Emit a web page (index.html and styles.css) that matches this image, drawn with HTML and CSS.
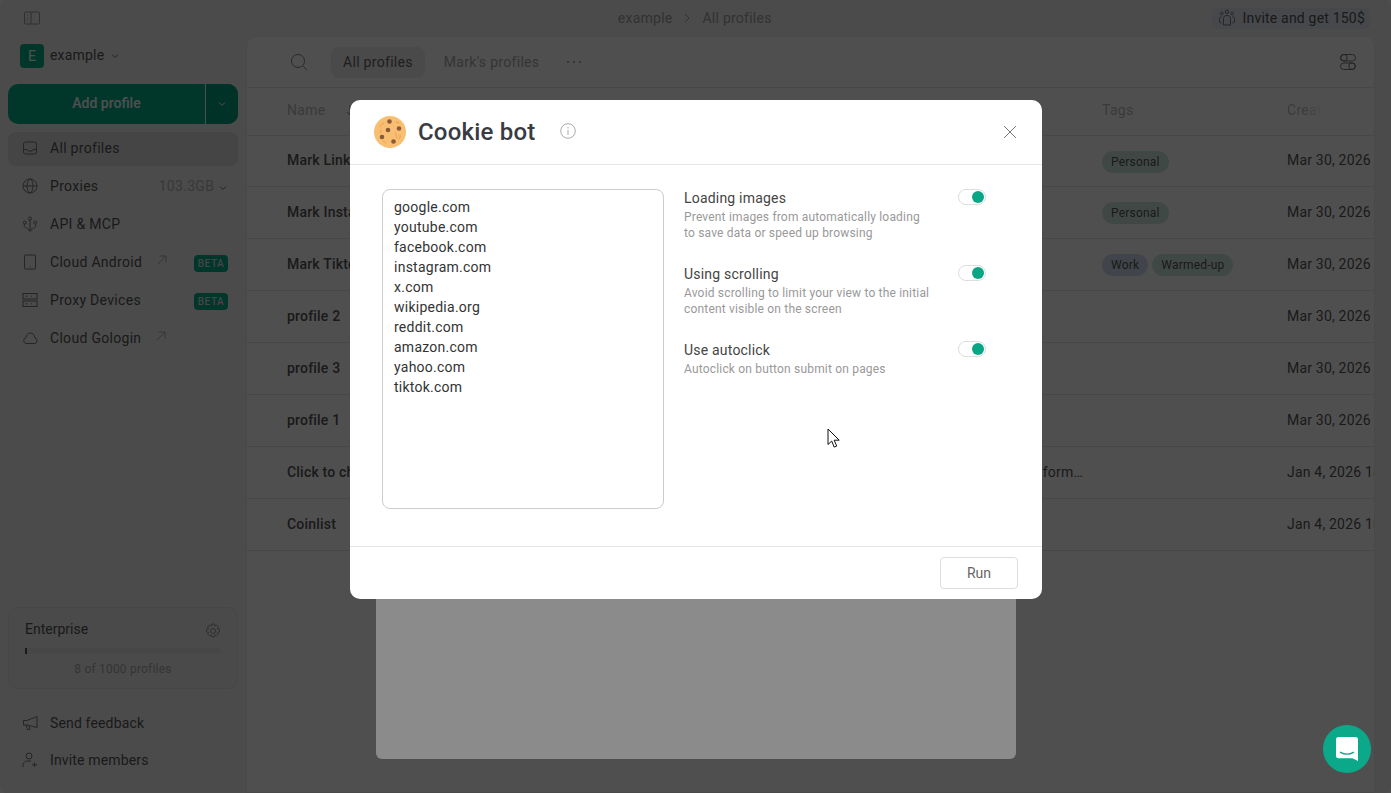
FILE: index.html
```html
<!DOCTYPE html>
<html lang="en">
<head>
    <meta charset="UTF-8">
    <title>Cookie bot</title>
    <link rel="stylesheet" href="styles.css">
</head>
<body>

<div class="app">
    <div class="topbar">
        <svg class="side-toggle" width="18" height="14" viewBox="0 0 18 14"><rect x="1.5" y="1" width="15" height="12" rx="1"/><path d="M8 1v12M4 4h1M4 7h1M4 10h1"/></svg>
        <div class="crumbs">
            <span>example</span>
            <svg width="8" height="10" viewBox="0 0 8 10"><path d="M2 1l4 4-4 4"/></svg>
            <span>All profiles</span>
        </div>
        <div class="invite">
            <svg width="18" height="18" viewBox="0 0 18 18"><circle cx="9" cy="2.8" r="1.6"/><circle cx="3.7" cy="4.5" r="1.3"/><circle cx="14.3" cy="4.5" r="1.3"/><path d="M5.5 16V9.5C5.5 7.5 7 6.5 9 6.5s3.500 1 3.500 3V16zM3.500 7.500C2 8 1.500 9 1.500 10.500v2.500l2 1M14.500 7.500C16 8 16.500 9 16.500 10.500v2.500l-2 1"/></svg>
            Invite and get 150$
        </div>
    </div>

    <div class="content">
        <div class="sidebar">
            <div class="workspace">
                <span class="avatar">E</span>
                <span>example</span>
                <svg class="chev" width="8" height="6" viewBox="0 0 8 6"><path d="M1 1.500l3 3 3-3"/></svg>
            </div>
            <div class="add-btn">
                <span class="add-main">Add profile</span>
                <span class="add-more"><svg class="chev" width="8" height="6" viewBox="0 0 8 6"><path d="M1 1.500l3 3 3-3"/></svg></span>
            </div>
            <div class="nav">
                <div class="nav-item active">
                    <svg width="16" height="16" viewBox="0 0 16 16"><rect x="1.500" y="2" width="13" height="12" rx="2"/><path d="M1.500 9.500h3.500l1 1.500h4l1-1.500h3.500"/></svg>
                    All profiles
                </div>
                <div class="nav-item">
                    <svg width="16" height="16" viewBox="0 0 16 16"><circle cx="8" cy="8" r="7"/><ellipse cx="8" cy="8" rx="3" ry="7"/><path d="M1 8h14"/></svg>
                    Proxies
                    <span class="traffic">103.3GB <svg class="chev" width="8" height="6" viewBox="0 0 8 6"><path d="M1 1.500l3 3 3-3"/></svg></span>
                </div>
                <div class="nav-item">
                    <svg width="16" height="16" viewBox="0 0 16 16"><circle cx="8" cy="2.500" r="1.500"/><path d="M8 4v11M8 15c-2 0-2-2-2-3M8 15c2 0 2-2 2-3"/><circle cx="2.800" cy="6.500" r="1.500"/><circle cx="13.200" cy="6.500" r="1.500"/><path d="M2.800 8c-1.500 2 0 4 2 4M13.200 8c1.500 2 0 4-2 4"/></svg>
                    API &amp; MCP
                </div>
                <div class="nav-item">
                    <svg width="16" height="16" viewBox="0 0 16 16"><rect x="2.500" y="1" width="11" height="14" rx="1"/><path d="M7.500 12.500h1"/></svg>
                    Cloud Android
                    <svg class="ext" width="10" height="10" viewBox="0 0 10 10"><path d="M1 9l8-8M2.500 1H9v6.500"/></svg>
                    <span class="beta">BETA</span>
                </div>
                <div class="nav-item">
                    <svg width="16" height="16" viewBox="0 0 16 16"><rect x="1" y="1.500" width="14" height="5.500" /><rect x="1" y="9" width="14" height="5.500"/><path d="M3.500 4.200h2M3.500 11.800h2M9 4.200h1M9 11.800h1"/></svg>
                    Proxy Devices
                    <span class="beta">BETA</span>
                </div>
                <div class="nav-item">
                    <svg width="16" height="16" viewBox="0 0 16 16"><path d="M4 13.500h8.500a2.800 2.800 0 0 0 .5-5.500C12.500 4.500 10.500 3 8.500 3 6 3 4.500 5 4 7.500a3.100 3.100 0 0 0 0 6z"/></svg>
                    Cloud Gologin
                    <svg class="ext" width="10" height="10" viewBox="0 0 10 10"><path d="M1 9l8-8M2.500 1H9v6.500"/></svg>
                </div>
            </div>

            <div class="plan">
                <div class="plan-top">
                    Enterprise
                    <svg width="16" height="16" viewBox="0 0 16 16"><circle cx="8" cy="8" r="2.500"/><path d="M6.700 1h2.600l.4 2 1.800-.9 1.900 1.900-1 1.700 2.100.5v2.600l-2.100.5 1 1.700-1.900 1.900-1.800-.9-.4 2H6.700l-.4-2-1.800.9L2.600 11l1-1.700-2.100-.5V6.200l2.100-.5-1-1.700 1.900-1.900 1.800.9z"/></svg>
                </div>
                <div class="plan-bar"><div class="plan-fill"></div></div>
                <div class="plan-count">8 of 1000 profiles</div>
            </div>
            <div class="side-link">
                <svg width="16" height="16" viewBox="0 0 16 16"><path d="M15 1.500v11L5 10H1.500V5.500H5zM4 10l1.500 4.500h2.500L7 10.800"/></svg>
                Send feedback
            </div>
            <div class="side-link">
                <svg width="16" height="16" viewBox="0 0 16 16"><circle cx="7" cy="4" r="3"/><path d="M1 15v-2c0-2.500 2-4 4-4h4M12.500 10.500v4.500M10 12.800h5"/></svg>
                Invite members
            </div>
        </div>

        <div class="main">
            <div class="toolbar">
                <svg class="search" width="18" height="18" viewBox="0 0 18 18"><circle cx="8" cy="8" r="6.500"/><path d="M13 13l4 4"/></svg>
                <span class="tab current">All profiles</span>
                <span class="tab">Mark's profiles</span>
                <svg class="dots" width="16" height="4" viewBox="0 0 16 4"><circle cx="2" cy="2" r="1"/><circle cx="8" cy="2" r="1"/><circle cx="14" cy="2" r="1"/></svg>
                <svg class="columns" width="18" height="18" viewBox="0 0 18 18"><rect x="1.500" y="1.500" width="15" height="6.500" rx="3.200"/><rect x="1.500" y="10" width="15" height="6.500" rx="3.200"/><circle cx="5" cy="4.700" r="3.200"/><circle cx="13" cy="13.200" r="3.200"/></svg>
            </div>
            <div class="row head">
                <span class="cell-name">Name <svg class="sort" width="8" height="12" viewBox="0 0 8 12"><path d="M4 1v10M1 8l3 3 3-3"/></svg></span>
                <span></span>
                <span>Tags</span>
                <span class="fade">Created</span>
            </div>
            <div class="row first"><b>Mark LinkedIn</b><span></span><span class="tags"><i class="tag green">Personal</i></span><span>Mar 30, 2026</span></div>
            <div class="row"><b>Mark Instagram</b><span></span><span class="tags"><i class="tag green">Personal</i></span><span>Mar 30, 2026</span></div>
            <div class="row"><b>Mark Tiktok</b><span></span><span class="tags"><i class="tag blue">Work</i><i class="tag green">Warmed-up</i></span><span>Mar 30, 2026</span></div>
            <div class="row"><b>profile 2</b><span></span><span></span><span>Mar 30, 2026</span></div>
            <div class="row"><b>profile 3</b><span></span><span></span><span>Mar 30, 2026</span></div>
            <div class="row"><b>profile 1</b><span></span><span></span><span>Mar 30, 2026</span></div>
            <div class="row"><b>Click to check</b><span class="note">Open the page and check the platform…</span><span></span><span>Jan 4, 2026 18:20</span></div>
            <div class="row"><b>Coinlist</b><span></span><span></span><span>Jan 4, 2026 18:11</span></div>
        </div>
    </div>
</div>

<div class="overlay"></div>
<div class="backdrop-card"></div>

<div class="modal">
    <div class="modal-head">
        <svg class="cookie" width="32" height="32" viewBox="0 0 32 32">
            <circle cx="16" cy="16" r="16" fill="#f8bf72"/>
            <g fill="#8a5a38">
                <circle cx="15.500" cy="5.500" r="2.300"/><circle cx="25" cy="12.500" r="2.300"/><circle cx="14" cy="14" r="2.300"/><circle cx="8" cy="21" r="2.300"/><circle cx="19.500" cy="25.500" r="2.300"/>
            </g>
            <g fill="none" stroke="#ee9f4e" stroke-width="1" stroke-linecap="round">
                <path d="M6 11c1-2 2-3 4-4M22 6l3 1M21 17c1 2 2 3 2 5M12 27c-1-1-2-1-3-2M26 19c1 1 0 3-1 4M7 14c0 1-1 2 0 3"/>
            </g>
        </svg>
        <h1>Cookie bot</h1>
        <svg class="info" width="16" height="16" viewBox="0 0 16 16"><circle cx="8" cy="8" r="7.300"/><path d="M8 7v5M8 4v1.500"/></svg>
        <svg class="close" width="14" height="14" viewBox="0 0 14 14"><path d="M1 1l12 12M13 1L1 13"/></svg>
    </div>
    <div class="modal-body">
        <div class="domains">
            <div>google.com</div>
            <div>youtube.com</div>
            <div>facebook.com</div>
            <div>instagram.com</div>
            <div>x.com</div>
            <div>wikipedia.org</div>
            <div>reddit.com</div>
            <div>amazon.com</div>
            <div>yahoo.com</div>
            <div>tiktok.com</div>
        </div>
        <div class="options">
            <div class="option">
                <div class="option-text">
                    <div class="option-title">Loading images</div>
                    <div class="option-desc">Prevent images from automatically loading<br>to save data or speed up browsing</div>
                </div>
                <span class="switch"></span>
            </div>
            <div class="option">
                <div class="option-text">
                    <div class="option-title">Using scrolling</div>
                    <div class="option-desc">Avoid scrolling to limit your view to the initial<br>content visible on the screen</div>
                </div>
                <span class="switch"></span>
            </div>
            <div class="option">
                <div class="option-text">
                    <div class="option-title">Use autoclick</div>
                    <div class="option-desc">Autoclick on button submit on pages</div>
                </div>
                <span class="switch"></span>
            </div>
        </div>
    </div>
    <div class="modal-foot">
        <button class="run">Run</button>
    </div>
</div>

<svg class="cursor" width="14" height="21" viewBox="0 0 14 21"><path d="M1 1v15.500l3.700-3.400 2.500 6 2.500-1-2.500-5.900h5z"/></svg>

<div class="chat">
    <svg width="24" height="26" viewBox="0 0 24 26"><path d="M3.500 1h17A2.500 2.500 0 0 1 23 3.500V25l-5.500-2.800H3.500A2.500 2.500 0 0 1 1 19.700V3.500A2.500 2.500 0 0 1 3.500 1z" fill="#fff"/><path d="M5.500 16.300c4 2.200 9 2.200 13 0" fill="none" stroke="#0ba98a" stroke-width="1.400" stroke-linecap="round"/></svg>
</div>

</body>
</html>
```

FILE: styles.css
```css
* {
    box-sizing: border-box;
}
html, body {
    height: 100%;
    margin: 0;
    background: #fff;
}
body {
    font-family: Roboto, "Liberation Sans", sans-serif;
    font-size: 14px;
    color: #555;
    overflow: hidden;
    position: relative;
}
svg {
    fill: none;
    stroke: #9a9a9a;
    stroke-width: 1;
    flex-shrink: 0;
}

/* app behind the dialog */
.app {
    height: 793px;
    background: #f1f1f1;
    border-radius: 6px;
    overflow: hidden;
}
.topbar {
    height: 36px;
    display: flex;
    align-items: center;
    justify-content: space-between;
    padding: 0 21px 0 23px;
}
.crumbs {
    display: flex;
    align-items: center;
    gap: 11px;
    color: #a2a2a2;
    letter-spacing: 0.25px;
    margin-left: 136px;
}
.invite {
    display: flex;
    align-items: center;
    gap: 6px;
    height: 21px;
    padding: 0 5px 0 6px;
    background: #e3e8f2;
    border-radius: 5px;
    letter-spacing: 0.2px;
}
.invite svg {
    stroke: #777;
}
.content {
    display: flex;
    height: 757px;
}

.sidebar {
    width: 246px;
    padding: 8px 8px 15px;
    display: flex;
    flex-direction: column;
}
.workspace {
    display: flex;
    align-items: center;
    gap: 6px;
    padding-left: 12px;
    height: 24px;
    letter-spacing: 0.2px;
}
.workspace > span:last-of-type {
    margin-top: -2px;
}
.avatar {
    width: 24px;
    height: 24px;
    border-radius: 4px;
    background: #06b08c;
    color: #fff;
    display: flex;
    align-items: center;
    justify-content: center;
}
.chev {
    stroke: #777;
    margin-left: 1px;
}
.add-btn {
    display: flex;
    height: 40px;
    margin-top: 16px;
    border-radius: 10px;
    overflow: hidden;
    color: #fff;
    font-weight: 500;
    background: #06b08c;
}
.add-main {
    width: 198px;
    display: flex;
    align-items: center;
    justify-content: center;
    padding-bottom: 2px;
    border-right: 1px solid #fff;
}
.add-more {
    flex: 1;
    background: #05a382;
    display: flex;
    align-items: center;
    justify-content: center;
}
.add-more .chev {
    stroke: #fff;
    margin: 0;
}
.nav {
    margin-top: 8px;
}
.nav-item {
    height: 34px;
    margin-bottom: 4px;
    display: flex;
    align-items: center;
    gap: 12px;
    padding: 0 10px 2px 14px;
    border-radius: 8px;
    letter-spacing: 0.3px;
}
.nav-item svg:first-child {
    stroke: #777;
}
.nav-item.active {
    background: #dedede;
}
.traffic {
    margin-left: auto;
    color: #b5b5b5;
    letter-spacing: 0.3px;
    margin-right: 1px;
}
.ext {
    stroke: #aaa;
    margin-left: 3px;
    margin-top: -4px;
}
.beta {
    margin-left: auto;
    margin-top: 3px;
    background: #06b08c;
    color: #ddd;
    font-size: 10px;
    font-weight: 500;
    letter-spacing: 0.6px;
    height: 17px;
    width: 34px;
    border-radius: 4px;
    display: flex;
    align-items: center;
    justify-content: center;
}
.plan {
    margin-top: auto;
    height: 82px;
    border: 1px solid #e2e2e2;
    border-radius: 10px;
    padding: 12px 16px 0;
    background: #eee;
}
.plan-top {
    display: flex;
    justify-content: space-between;
    align-items: center;
    height: 18px;
}
.plan-top svg {
    margin-top: 3px;
}
.plan-bar {
    height: 6px;
    margin-top: 10px;
    background: #e6e6e6;
    border-radius: 3px;
}
.plan-fill {
    width: 2px;
    height: 6px;
    background: #555;
}
.plan-count {
    margin-top: 8px;
    font-size: 12px;
    text-align: center;
    color: #aaa;
    letter-spacing: 0.2px;
}
.side-link {
    height: 37px;
    display: flex;
    align-items: center;
    gap: 12px;
    padding-left: 14px;
    letter-spacing: 0.15px;
}
.side-link svg {
    stroke: #777;
}
.plan + .side-link {
    margin-top: 15px;
}

.main {
    width: 1129px;
    height: 100%;
    background: #fff;
    border: 1px solid #ebebeb;
    border-radius: 10px 10px 0 0;
    overflow: hidden;
}
.toolbar {
    height: 51px;
    display: flex;
    align-items: center;
    padding: 0 17px 0 43px;
    border-bottom: 1px solid #e5e5e5;
}
.search {
    stroke: #888;
    margin-right: 23px;
}
.tab {
    height: 31px;
    padding: 0 12px;
    display: flex;
    align-items: center;
    border-radius: 8px;
    margin-right: 7px;
    color: #aaa;
    letter-spacing: 0.3px;
}
.tab.current {
    background: #ededed;
    color: #666;
}
.dots {
    stroke: none;
    fill: #999;
    margin-left: 8px;
}
.columns {
    stroke: #777;
    margin-left: auto;
}
.row {
    height: 52px;
    display: grid;
    grid-template-columns: 500px 315px 185px 200px;
    padding: 0 0 2px 40px;
    align-items: center;
    border-bottom: 1px solid #e5e5e5;
    white-space: nowrap;
    letter-spacing: 0.2px;
}
.row b {
    font-weight: 500;
}
.row.first {
    height: 51px;
}
.head {
    height: 48px;
    padding-bottom: 3px;
    color: #bbb;
    letter-spacing: 0.3px;
}
.cell-name {
    display: flex;
    align-items: center;
    gap: 20px;
}
.sort {
    stroke: #888;
}
.fade {
    background: linear-gradient(90deg, #bbb 18px, #fff 36px);
    -webkit-background-clip: text;
    background-clip: text;
    color: transparent;
}
.note {
    overflow: hidden;
    text-overflow: ellipsis;
    padding-right: 19px;
    text-align: right;
}
.tags {
    display: flex;
    gap: 4px;
}
.tag {
    font-style: normal;
    font-size: 12px;
    height: 22px;
    padding: 0 9px;
    border-radius: 11px;
    display: flex;
    align-items: center;
    letter-spacing: 0.2px;
    margin-top: 3px;
}
.tag.green {
    background: #cfe9de;
}
.tag.blue {
    background: #d0dcf2;
}

/* dim layer and what sits over it */
.overlay {
    position: absolute;
    inset: 0;
    background: rgba(0, 0, 0, 0.69);
}
.backdrop-card {
    position: absolute;
    left: 376px;
    top: 400px;
    width: 640px;
    height: 359px;
    background: #8b8b8b;
    border-radius: 6px;
}
.modal {
    position: absolute;
    left: 350px;
    top: 100px;
    width: 692px;
    height: 499px;
    background: #fff;
    border-radius: 10px;
    display: flex;
    flex-direction: column;
    color: #33343a;
}
.modal-head {
    height: 65px;
    flex-shrink: 0;
    display: flex;
    align-items: center;
    padding: 0 25px 0 24px;
    border-bottom: 1px solid #e6e6e6;
}
.cookie {
    stroke: none;
}
.modal-head h1 {
    font-size: 24px;
    font-weight: 500;
    margin: 0 0 0 12px;
    color: #3a3b42;
    letter-spacing: 0.2px;
}
.info {
    stroke: #aaa;
    margin: -2px 0 0 25px;
}
.close {
    stroke: #777;
    margin-left: auto;
}
.modal-body {
    flex: 1;
    display: flex;
    padding: 24px 32px;
}
.domains {
    width: 282px;
    height: 320px;
    border: 1px solid #ccc;
    border-radius: 8px;
    padding: 7px 11px;
    line-height: 20px;
    letter-spacing: 0.25px;
    color: #333;
}
.options {
    margin-left: 20px;
    flex: 1;
}
.option {
    display: flex;
    justify-content: space-between;
    align-items: flex-start;
    width: 302px;
    height: 76px;
}
.option-title {
    line-height: 18px;
    letter-spacing: 0.2px;
    color: #444;
}
.option-desc {
    margin-top: 2px;
    font-size: 12px;
    line-height: 16px;
    color: #999;
    letter-spacing: 0.18px;
}
.switch {
    width: 28px;
    height: 16px;
    border: 1px solid #ddd;
    border-radius: 8px;
    position: relative;
}
.switch::after {
    content: "";
    position: absolute;
    right: 1px;
    top: 1px;
    width: 12px;
    height: 12px;
    border-radius: 50%;
    background: #0aa585;
}
.modal-foot {
    height: 53px;
    flex-shrink: 0;
    border-top: 1px solid #e6e6e6;
    display: flex;
    justify-content: flex-end;
    align-items: center;
    padding-right: 24px;
}
.run {
    width: 78px;
    height: 32px;
    background: #fff;
    border: 1px solid #ddd;
    border-radius: 4px;
    font-family: inherit;
    font-size: 14px;
    color: #666;
}
.cursor {
    position: absolute;
    left: 827px;
    top: 428px;
    fill: #fff;
    stroke: #111;
}
.chat {
    position: absolute;
    left: 1323px;
    top: 725px;
    width: 48px;
    height: 48px;
    border-radius: 50%;
    background: #0ba98a;
    display: flex;
    align-items: center;
    justify-content: center;
}
.chat svg {
    stroke: none;
}
```
